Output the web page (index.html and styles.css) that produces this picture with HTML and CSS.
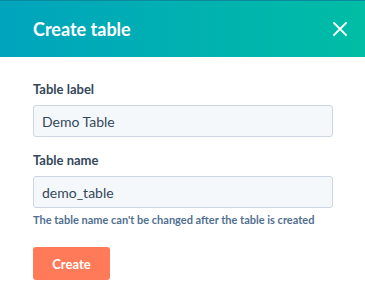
FILE: index.html
```html
<!DOCTYPE html>
<html lang="en">
  <head>
    <meta charset="UTF-8" />
    <meta name="viewport" content="width=device-width, initial-scale=1.0" />
    <title>Create table</title>
    <link rel="stylesheet" href="styles.css">
  </head>
  <body>
    <div class="modal">
      <div class="header">
        <h1>Create table</h1>
        <button type="button" class="close" aria-label="Close">
          <svg width="14" height="14" viewBox="0 0 14 14">
            <path d="M1 1 L13 13 M13 1 L1 13" stroke="#fff" stroke-width="1.8" stroke-linecap="round" />
          </svg>
        </button>
      </div>
      <form class="body">
        <div class="field">
          <label for="label">Table label</label>
          <input type="text" id="label" value="Demo Table" />
        </div>
        <div class="field">
          <label for="name">Table name</label>
          <input type="text" id="name" value="demo_table" />
          <p class="help">The table name can't be changed after the table is created</p>
        </div>
        <button type="button" class="create">Create</button>
      </form>
    </div>
  </body>
</html>
```

FILE: styles.css
```css
body {
  margin: 0;
  padding: 0;
  font-family: "Lato", "Noto Sans", sans-serif;
  background-color: #ffffff;
  color: #33475b;
}

.header {
  display: flex;
  align-items: center;
  justify-content: space-between;
  height: 57px;
  padding: 0 18px 0 33px;
  background: linear-gradient(90deg, #00a4bd, #00bda5);
  border-top: 1px solid #0b8a9e;
  box-sizing: border-box;
}

h1 {
  margin: 0;
  color: #ffffff;
  font-size: 18px;
  font-weight: 700;
}

.close {
  display: flex;
  padding: 0;
  border: none;
  background: none;
  cursor: pointer;
}

.body {
  display: flex;
  flex-direction: column;
  padding: 24px 32px 0 33px;
}

.field {
  display: flex;
  flex-direction: column;
  margin-bottom: 15px;
}

label {
  font-size: 13px;
  font-weight: 700;
  margin-bottom: 8px;
  line-height: 16px;
}

input {
  height: 32px;
  box-sizing: border-box;
  padding: 0 8px;
  border: 1px solid #cbd6e2;
  border-radius: 3px;
  background-color: #f5f8fa;
  color: #33475b;
  font-family: inherit;
  font-size: 14px;
}

.help {
  margin: 5px 0 0;
  font-size: 11px;
  line-height: 14px;
  font-weight: 700;
  color: #516f90;
}

.create {
  align-self: flex-start;
  width: 77px;
  height: 33px;
  margin-top: 5px;
  border: none;
  border-radius: 3px;
  background-color: #ff7a59;
  color: #ffffff;
  font-family: inherit;
  font-size: 13px;
  font-weight: 700;
  cursor: pointer;
}
```
